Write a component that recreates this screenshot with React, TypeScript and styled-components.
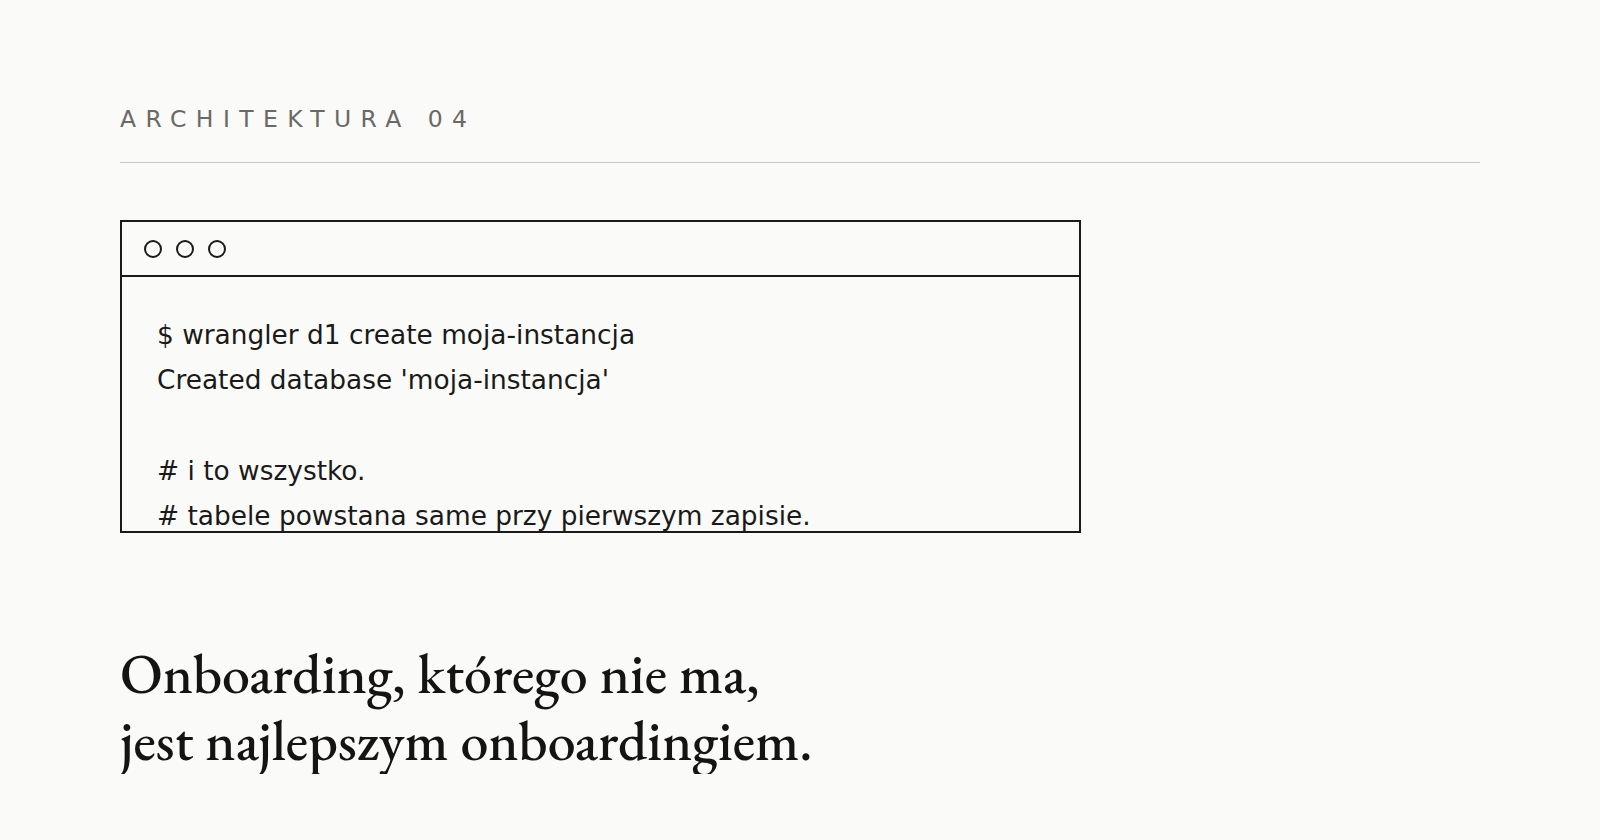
import React from "react";
import styled, { createGlobalStyle } from "styled-components";

const GlobalStyle = createGlobalStyle`
  html, body {
    margin: 0;
    padding: 0;
    background: #fafaf8;
  }
  * { box-sizing: border-box; }
`;

const Page = styled.main`
  padding: 108px 120px 0;
  display: flex;
  flex-direction: column;
  align-items: flex-start;
`;

const Eyebrow = styled.p`
  align-self: stretch;
  margin: 0;
  padding-bottom: 30.5px;
  border-bottom: 1px solid #c6c6c4;
  font-family: "DejaVu Sans", sans-serif;
  font-size: 23.5px;
  line-height: 1;
  letter-spacing: 0.4em;
  color: #6b6966;
  text-transform: uppercase;
`;

const Terminal = styled.section`
  margin-top: 57px;
  width: 961px;
  height: 313px;
  border: 2px solid #1a1a1a;
  display: flex;
  flex-direction: column;
  overflow: hidden;
`;

const TitleBar = styled.div`
  flex: none;
  height: 55px;
  border-bottom: 2px solid #1a1a1a;
  display: flex;
  align-items: center;
  gap: 14px;
  padding-left: 22px;
`;

const Dot = styled.span`
  width: 18px;
  height: 18px;
  border-radius: 50%;
  border: 2px solid #1a1a1a;
`;

const Code = styled.pre`
  margin: 0;
  padding: 35px 35px;
  font-family: "DejaVu Sans", sans-serif;
  font-size: 26.4px;
  line-height: 45.2px;
  color: #1a1a1a;
  white-space: pre;
`;

const Heading = styled.h1`
  margin: 107px 0 0;
  font-family: "EB Garamond", "Liberation Serif", serif;
  font-weight: 500;
  font-size: 56px;
  line-height: 67px;
  color: #161412;
`;

export default function App() {
  return (
    <>
      <GlobalStyle />
      <Page>
        <Eyebrow>Architektura 04</Eyebrow>
        <Terminal>
          <TitleBar>
            <Dot />
            <Dot />
            <Dot />
          </TitleBar>
          <Code>{`$ wrangler d1 create moja-instancja
Created database 'moja-instancja'

# i to wszystko.
# tabele powstana same przy pierwszym zapisie.`}</Code>
        </Terminal>
        <Heading>
          Onboarding, którego nie ma,
          <br />
          jest najlepszym onboardingiem.
        </Heading>
      </Page>
    </>
  );
}
